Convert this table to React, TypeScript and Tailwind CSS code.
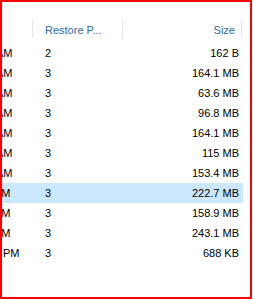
import React from 'react';

interface Row {
  name: string;
  nameOffset: string;
  points: string;
  size: string;
  selected?: boolean;
}

const rows: Row[] = [
  { name: 'AM', nameOffset: 'ml-[-6px]', points: '2', size: '162 B' },
  { name: 'AM', nameOffset: 'ml-[-6px]', points: '3', size: '164.1 MB' },
  { name: 'AM', nameOffset: 'ml-[-6px]', points: '3', size: '63.6 MB' },
  { name: 'AM', nameOffset: 'ml-[-6px]', points: '3', size: '96.8 MB' },
  { name: 'AM', nameOffset: 'ml-[-6px]', points: '3', size: '164.1 MB' },
  { name: 'AM', nameOffset: 'ml-[-6px]', points: '3', size: '115 MB' },
  { name: 'AM', nameOffset: 'ml-[-6px]', points: '3', size: '153.4 MB' },
  { name: 'AM', nameOffset: 'ml-[-8px]', points: '3', size: '222.7 MB', selected: true },
  { name: 'AM', nameOffset: 'ml-[-8px]', points: '3', size: '158.9 MB' },
  { name: 'AM', nameOffset: 'ml-[-8px]', points: '3', size: '243.1 MB' },
  { name: 'PM', nameOffset: 'ml-[1px]', points: '3', size: '688 KB' },
];

export default function App() {
  return (
    <div className="w-[254px] h-[299px] bg-white font-['Liberation_Sans',Arial,sans-serif] text-[11px] leading-[20px]">
      <div className="w-[252px] h-[299px] border-2 border-[#ff0000] bg-white overflow-hidden">
        {/* Column headers */}
        <div className="mt-[18px] flex h-[20px] text-[#2f6a9b]">
          <div className="w-[30px]" />
          <div className="w-px h-[18px] bg-[#e5e5e5]" />
          <div className="w-[89px] pl-[12px] whitespace-nowrap">Restore P...</div>
          <div className="w-px h-[18px] bg-[#e5e5e5]" />
          <div className="w-[118px] pr-[6px] text-right">Size</div>
          <div className="w-px h-[18px] bg-[#e5e5e5]" />
        </div>

        {/* Rows */}
        <div className="mt-[3px] flex flex-col">
          {rows.map((row, i) => (
            <div
              key={i}
              className={`flex w-[241px] h-[20px] text-black ${row.selected ? 'bg-[#cce8ff]' : ''}`}
            >
              <div className="w-[31px] overflow-hidden whitespace-nowrap">
                <span className={`block ${row.nameOffset}`}>{row.name}</span>
              </div>
              <div className="w-[90px] pl-[12px]">{row.points}</div>
              <div className="w-[118px] pr-[2px] text-right">{row.size}</div>
            </div>
          ))}
        </div>
      </div>
    </div>
  );
}
